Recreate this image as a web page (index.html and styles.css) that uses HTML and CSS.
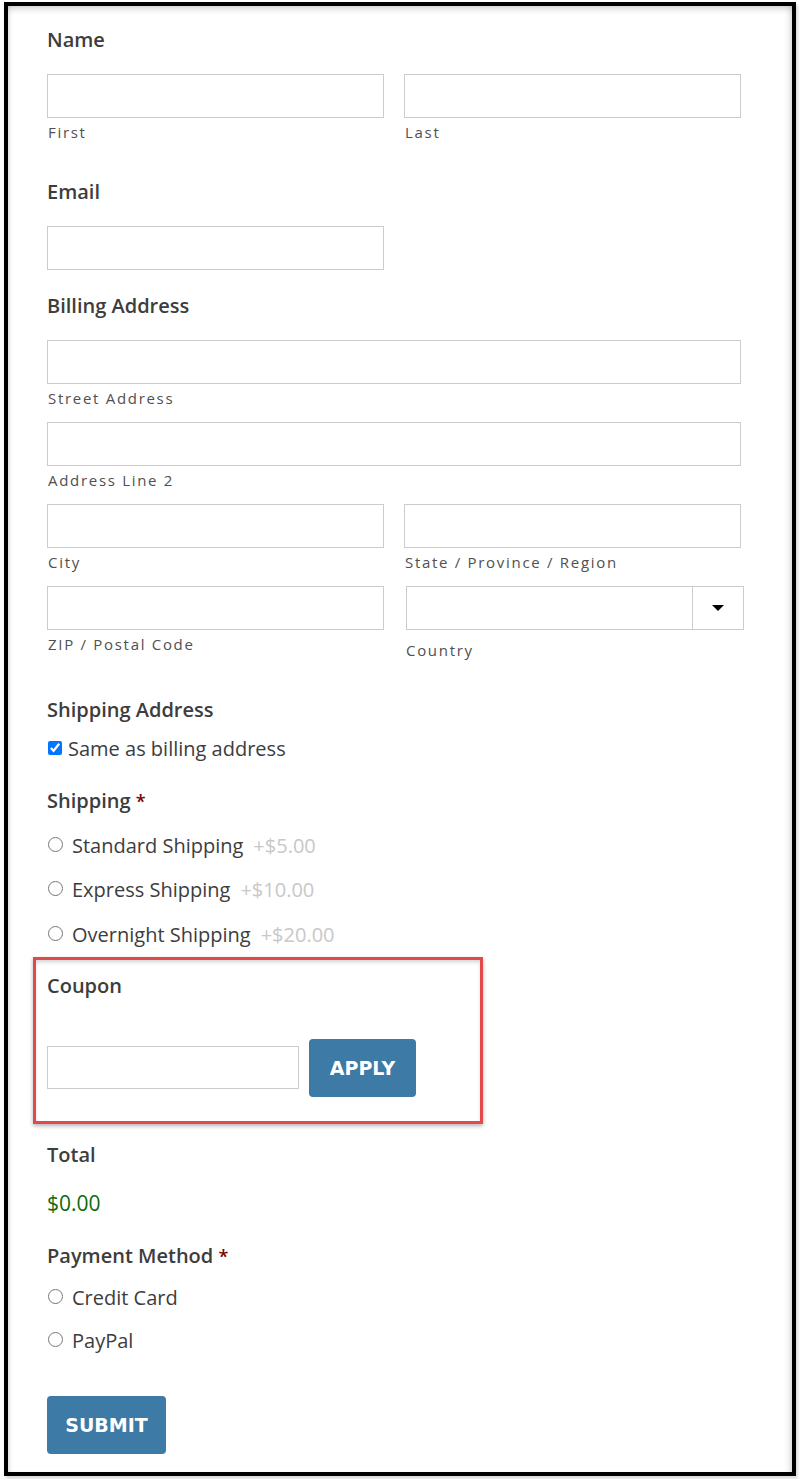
FILE: index.html
```html
<!DOCTYPE html>
<html lang="en">
<head>
<meta charset="utf-8">
<title>Checkout Form</title>
<link rel="stylesheet" href="styles.css">
</head>
<body>
<div class="frame">
  <form class="form">
    <div class="field">
      <div class="heading">Name</div>
      <div class="row">
        <div class="col">
          <div class="input"></div>
          <div class="sub">First</div>
        </div>
        <div class="col">
          <div class="input"></div>
          <div class="sub">Last</div>
        </div>
      </div>
    </div>

    <div class="field field-tight">
      <div class="heading">Email</div>
      <div class="row">
        <div class="col"><div class="input"></div></div>
        <div class="col"></div>
      </div>
    </div>

    <div class="field">
      <div class="heading">Billing Address</div>
      <div class="col">
        <div class="input"></div>
        <div class="sub">Street Address</div>
      </div>
      <div class="col">
        <div class="input"></div>
        <div class="sub">Address Line 2</div>
      </div>
      <div class="row">
        <div class="col">
          <div class="input"></div>
          <div class="sub">City</div>
        </div>
        <div class="col">
          <div class="input"></div>
          <div class="sub">State / Province / Region</div>
        </div>
      </div>
      <div class="row">
        <div class="col">
          <div class="input"></div>
          <div class="sub">ZIP / Postal Code</div>
        </div>
        <div class="col">
          <div class="select"><span class="select-arrow"></span></div>
          <div class="sub sub-country">Country</div>
        </div>
      </div>
    </div>

    <div class="field-ship">
      <div class="heading">Shipping Address</div>
      <label class="check-row"><input type="checkbox" class="checkbox" checked> Same as billing address</label>
    </div>

    <div class="field-radios">
      <div class="heading">Shipping <span class="req">*</span></div>
      <label class="radio-row"><input type="radio" name="ship" class="radio"><span>Standard Shipping</span><span class="price">+$5.00</span></label>
      <label class="radio-row"><input type="radio" name="ship" class="radio"><span>Express Shipping</span><span class="price">+$10.00</span></label>
      <label class="radio-row"><input type="radio" name="ship" class="radio"><span>Overnight Shipping</span><span class="price">+$20.00</span></label>
    </div>

    <div class="coupon-box">
      <div class="heading">Coupon</div>
      <div class="coupon-row">
        <div class="input coupon-input"></div>
        <button type="button" class="btn btn-apply">APPLY</button>
      </div>
    </div>

    <div class="field-total">
      <div class="heading">Total</div>
      <div class="total">$0.00</div>
    </div>

    <div class="field-pay">
      <div class="heading">Payment Method <span class="req">*</span></div>
      <label class="radio-row radio-row-pay"><input type="radio" name="pay" class="radio"><span>Credit Card</span></label>
      <label class="radio-row radio-row-pay"><input type="radio" name="pay" class="radio"><span>PayPal</span></label>
    </div>

    <button type="button" class="btn btn-submit">SUBMIT</button>
  </form>
</div>
</body>
</html>
```

FILE: styles.css
```css
html, body {
  margin: 0;
  padding: 0;
  background: #ffffff;
}

body {
  width: 800px;
  height: 1479px;
  overflow: hidden;
  font-family: "Open Sans", "DejaVu Sans", sans-serif;
  color: #3d3d3d;
}

.frame {
  box-sizing: border-box;
  margin: 2px 4px 0 4px;
  width: 792px;
  height: 1474px;
  border: 4px solid #000;
  box-shadow: inset 0 6px 6px -3px rgba(0,0,0,0.18), inset 5px 0 5px -4px rgba(0,0,0,0.12), inset -6px 0 6px -4px rgba(0,0,0,0.15), 2px 3px 3px rgba(0,0,0,0.15);
  background: #fff;
}

.form {
  padding: 22px 0 0 39px;
  width: 694px;
}

.heading {
  font-size: 20px;
  font-weight: 600;
  line-height: 24px;
  height: 24px;
  color: #3d3d3d;
}

.req {
  color: #7a0000;
  font-size: 18px;
}

.field {
  margin-bottom: 24px;
}

.field .heading {
  margin-bottom: 22px;
}

.row {
  display: flex;
  gap: 20px;
}

.col {
  flex: 1 1 0;
  min-width: 0;
}

.input {
  box-sizing: border-box;
  height: 44px;
  border: 1px solid #cccccc;
  background: #fff;
}

.sub {
  margin-top: 4px;
  margin-bottom: 14px;
  height: 20px;
  line-height: 20px;
  font-size: 15px;
  letter-spacing: 1.7px;
  color: #505050;
  padding-left: 1px;
}

.select {
  box-sizing: border-box;
  height: 44px;
  border: 1px solid #cccccc;
  display: flex;
  justify-content: flex-end;
  margin-left: 2px;
  margin-right: -3px;
}

.select-arrow {
  width: 50px;
  border-left: 1px solid #cccccc;
  display: flex;
  align-items: center;
  justify-content: center;
}

.select-arrow::after {
  content: "";
  width: 0;
  height: 0;
  border-left: 6px solid transparent;
  border-right: 6px solid transparent;
  border-top: 6px solid #000;
}

.sub-country {
  margin-top: 10px;
  margin-left: 1px;
}

.field-ship {
  margin-bottom: 29px;
}

.check-row {
  display: flex;
  align-items: center;
  height: 24px;
  margin-top: 14px;
  font-size: 20px;
  color: #3d3d3d;
}

.checkbox {
  width: 14px;
  height: 14px;
  margin: 0 6px 0 1px;
  accent-color: #0075ff;
}

.field-radios .heading {
  margin-bottom: 10px;
}

.radio-row {
  display: flex;
  align-items: center;
  height: 44.5px;
  font-size: 20px;
  color: #3d3d3d;
}

.radio {
  width: 15px;
  height: 15px;
  margin: 0 9px 2px 1px;
}

.price {
  color: #c8c8c8;
  margin-left: 10px;
}

.coupon-box {
  margin: 0 0 19px -14px;
  width: 433px;
  border: 3px solid #e24a4a;
  padding: 14px 0 24px 11px;
  box-shadow: 0 2px 4px rgba(0,0,0,0.3), inset 0 3px 4px -1px rgba(0,0,0,0.18);
}

.coupon-row {
  display: flex;
  align-items: center;
  gap: 10px;
  margin-top: 41px;
}

.coupon-input {
  width: 252px;
  height: 43px;
}

.btn {
  font-family: "DejaVu Sans", "Open Sans", sans-serif;
  font-weight: 700;
  font-size: 19px;
  color: #ffffff;
  background: #3d7aa6;
  border: none;
  border-radius: 4px;
  height: 58px;
  padding: 0;
  cursor: pointer;
}

.btn-apply {
  width: 107px;
}

.field-total .heading {
  margin-bottom: 24px;
}

.total {
  font-size: 21px;
  line-height: 24px;
  color: #0c6b0c;
}

.field-pay {
  margin-top: 29px;
}

.field-pay .heading {
  margin-bottom: 8px;
}

.radio-row-pay {
  height: 43px;
}

.btn-submit {
  margin-top: 34px;
  width: 119px;
}
```
